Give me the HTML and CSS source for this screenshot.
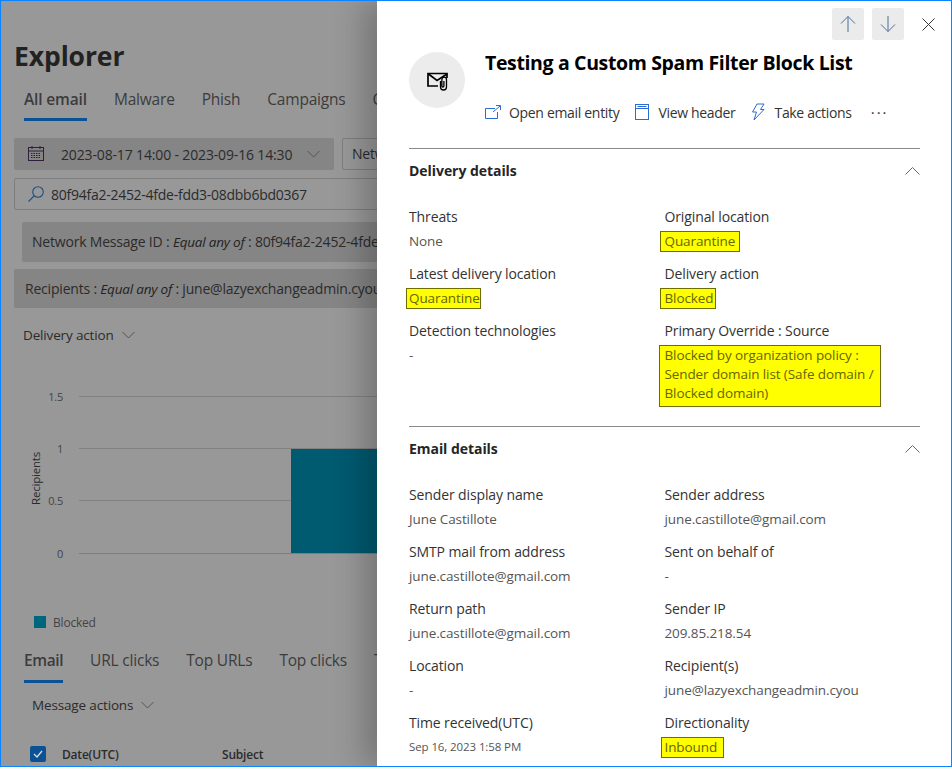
FILE: index.html
```html
<!DOCTYPE html>
<html lang="en">
<head>
<meta charset="utf-8">
<title>Explorer</title>
<link rel="stylesheet" href="styles.css">
</head>
<body>
<div class="frame">
  <main class="page">
    <h1 class="page-title">Explorer</h1>
    <nav class="tabs top-tabs">
      <span class="tab active">All email</span><span class="tab">Malware</span><span class="tab">Phish</span><span class="tab">Campaigns</span><span class="tab">Content</span>
    </nav>
    <div class="filter-row">
      <div class="date-chip">
        <svg class="ico" width="18" height="18" viewBox="0 0 18 18" fill="none" stroke="#2f1f3a"><rect x="1.5" y="2.5" width="15" height="13"/><path d="M1.500 6h15M5 1v3M13 1v3"/><path d="M4 8.500h10M4 10.500h10M4 12.500h10" stroke-dasharray="1.500 1"/></svg>
        <span class="date-text">2023-08-17 14:00 - 2023-09-16 14:30</span>
        <svg class="chev" width="13" height="8" viewBox="0 0 13 8" fill="none" stroke="#555"><path d="M.5 1l6 6 6-6"/></svg>
      </div>
      <div class="net-chip">Network Message ID</div>
    </div>
    <div class="search">
      <svg width="18" height="18" viewBox="0 0 18 18" fill="none" stroke="#1f4f86" stroke-width="1.100"><circle cx="11" cy="7" r="5.300"/><path d="M7 11l-5.500 5.500"/></svg>
      <span>80f94fa2-2452-4fde-fdd3-08dbb6bd0367</span>
    </div>
    <div class="pill pill-a">Network Message ID : <i>Equal any of</i> : 80f94fa2-2452-4fde-fdd3-08dbb6bd0367</div>
    <div class="pill pill-b">Recipients : <i>Equal any of</i> : june@lazyexchangeadmin.cyou</div>
    <div class="drop delivery-drop">Delivery action
      <svg width="13" height="8" viewBox="0 0 13 8" fill="none" stroke="#555"><path d="M.5 1l6 6 6-6"/></svg>
    </div>
    <section class="chart">
      <span class="y-title">Recipients</span>
      <div class="tick"><span class="tick-num">1.5</span><span class="tick-line"></span></div>
      <div class="tick"><span class="tick-num">1</span><span class="tick-line"></span></div>
      <div class="tick"><span class="tick-num">0.5</span><span class="tick-line"></span></div>
      <div class="tick"><span class="tick-num">0</span><span class="tick-line base"></span></div>
      <div class="bar"></div>
    </section>
    <div class="legend"><span class="swatch"></span>Blocked</div>
    <nav class="tabs bottom-tabs">
      <span class="tab active">Email</span><span class="tab">URL clicks</span><span class="tab">Top URLs</span><span class="tab">Top clicks</span><span class="tab">Top targeted users</span>
    </nav>
    <div class="drop message-drop">Message actions
      <svg width="13" height="8" viewBox="0 0 13 8" fill="none" stroke="#555"><path d="M.5 1l6 6 6-6"/></svg>
    </div>
    <div class="table-head">
      <span class="check"><svg width="10" height="8" viewBox="0 0 10 8" fill="none" stroke="#ddd" stroke-width="1.300"><path d="M1 4l3 3 5-6"/></svg></span>
      <span class="th-date">Date(UTC)</span>
      <span>Subject</span>
    </div>
  </main>

  <aside class="panel">
    <div class="nav-row">
      <button class="nav-btn" aria-label="Previous"><svg width="16" height="18" viewBox="0 0 16 18" fill="none" stroke="#4a6f96"><path d="M8 17V1.500M1 8.500l7-7 7 7"/></svg></button>
      <button class="nav-btn" aria-label="Next"><svg width="16" height="18" viewBox="0 0 16 18" fill="none" stroke="#4a6f96"><path d="M8 1v15.500M1 9.500l7 7 7-7"/></svg></button>
      <button class="close-btn" aria-label="Close"><svg width="13" height="13" viewBox="0 0 13 13" fill="none" stroke="#333"><path d="M.5.500l12 12M12.500.500l-12 12"/></svg></button>
    </div>
    <header class="head">
      <div class="avatar">
        <svg class="mail-ico" width="22" height="20" viewBox="0 0 22 20" fill="none" stroke="#000" stroke-width="1.700"><path d="M11 14H1V1.500h19V6"/><path d="M1.500 2l8.500 6.500L20 2"/><path d="M13.500 9v6a3 3 0 0 0 6 0V7.500a2.300 2.300 0 0 0-4.600 0V14a1 1 0 0 0 2 0V9" stroke-width="1.300"/></svg>
      </div>
      <div class="head-main">
        <h2 class="subject">Testing a Custom Spam Filter Block List</h2>
        <div class="actions">
          <span class="act act-open"><svg width="16" height="14" viewBox="0 0 16 14" fill="none" stroke="#2b6cd4"><path d="M10 3.500H.5v10h12V7"/><path d="M8 7l7-6M11 .5h4.500V5"/></svg>Open email entity</span>
          <span class="act"><svg width="14" height="16" viewBox="0 0 14 16" fill="none" stroke="#2b6cd4"><rect x=".5" y=".5" width="13" height="15"/><path d="M.5 4.500h13M2.500 2.500h9"/></svg>View header</span>
          <span class="act"><svg width="14" height="18" viewBox="0 0 14 18" fill="none" stroke="#2b6cd4"><path d="M6 1h7L9.500 6.500H13L3 17l2.500-8H1.500z"/></svg>Take actions</span>
          <span class="more">···</span>
        </div>
      </div>
    </header>

    <section class="sec">
      <div class="sec-head"><h3>Delivery details</h3><svg width="15" height="8" viewBox="0 0 15 8" fill="none" stroke="#666"><path d="M.5 7.500l7-7 7 7"/></svg></div>
      <div class="grid">
        <div class="field"><div class="lab">Threats</div><div class="val">None</div></div>
        <div class="field"><div class="lab">Original location</div><div class="val"><span class="mark m-original">Quarantine</span></div></div>
        <div class="field"><div class="lab">Latest delivery location</div><div class="val"><span class="mark m-latest">Quarantine</span></div></div>
        <div class="field"><div class="lab">Delivery action</div><div class="val"><span class="mark m-blocked">Blocked</span></div></div>
        <div class="field"><div class="lab">Detection technologies</div><div class="val">-</div></div>
        <div class="field"><div class="lab">Primary Override : Source</div><div class="val"><span class="mark block">Blocked by organization policy :<br>Sender domain list (Safe domain /<br>Blocked domain)</span></div></div>
      </div>
    </section>

    <section class="sec sec-email">
      <div class="sec-head"><h3>Email details</h3><svg width="15" height="8" viewBox="0 0 15 8" fill="none" stroke="#666"><path d="M.5 7.500l7-7 7 7"/></svg></div>
      <div class="grid">
        <div class="field"><div class="lab">Sender display name</div><div class="val">June Castillote</div></div>
        <div class="field"><div class="lab">Sender address</div><div class="val">june.castillote@gmail.com</div></div>
        <div class="field"><div class="lab">SMTP mail from address</div><div class="val">june.castillote@gmail.com</div></div>
        <div class="field"><div class="lab">Sent on behalf of</div><div class="val">-</div></div>
        <div class="field"><div class="lab">Return path</div><div class="val">june.castillote@gmail.com</div></div>
        <div class="field"><div class="lab">Sender IP</div><div class="val">209.85.218.54</div></div>
        <div class="field"><div class="lab">Location</div><div class="val">-</div></div>
        <div class="field"><div class="lab">Recipient(s)</div><div class="val">june@lazyexchangeadmin.cyou</div></div>
        <div class="field"><div class="lab">Time received(UTC)</div><div class="val small">Sep 16, 2023 1:58 PM</div></div>
        <div class="field"><div class="lab">Directionality</div><div class="val"><span class="mark m-inbound">Inbound</span></div></div>
      </div>
    </section>
  </aside>
</div>
</body>
</html>
```
FILE: styles.css
```css
* { box-sizing: border-box; }
html, body { margin: 0; padding: 0; height: 767px; overflow: hidden; }
body { font-family: "Open Sans", "Liberation Sans", sans-serif; font-size: 14px; letter-spacing: -0.2px; color: #2b2b2b; }
h1, h2, h3 { margin: 0; }
.frame { position: relative; width: 952px; height: 767px; overflow: hidden; background: #989898; border: 1px solid #0a84ff; }

/* Dimmed page */
.page { width: 376px; height: 100%; padding-left: 13px; white-space: nowrap; overflow: hidden; }
.page-title { padding-top: 37px; font-size: 26.500px; line-height: 36px; font-weight: 700; letter-spacing: -0.1px; color: #222; }
.tabs { display: flex; font-size: 15.500px; letter-spacing: -0.2px; color: #3c3c3c; }
.tab { margin-right: 27px; line-height: 20px; }
.tab.active { font-weight: 600; letter-spacing: -0.15px; border-bottom: 3px solid #0a5294; }
.top-tabs { margin: 15px 0 0 10px; height: 32px; }
.top-tabs .tab { padding-bottom: 9px; }
.bottom-tabs .tab.active { letter-spacing: -0.4px; }
.filter-row { display: flex; gap: 8px; margin-top: 17px; }
.date-chip { flex: none; width: 320px; height: 32px; display: flex; align-items: center; padding-left: 13px; background: #858585; border-radius: 2px; letter-spacing: -0.15px; }
.date-text { margin-left: 16px; }
.chev { margin-left: 15px; }
.net-chip { flex: none; width: 200px; height: 32px; padding-left: 9px; line-height: 30px; border: 1px solid #7e7e7e; border-radius: 2px; }
.search { height: 32px; width: 500px; margin-top: 8px; padding-left: 12px; display: flex; align-items: center; gap: 6px; border: 1px solid #7e7e7e; border-radius: 2px; letter-spacing: -0.26px; }
.pill { background: #858585; border-radius: 2px; width: 500px; overflow: hidden; }
.pill-a { margin: 12px 0 0 8px; padding-left: 10px; height: 40px; line-height: 40px; }
.pill-b { margin-top: 7px; padding-left: 11px; height: 39px; line-height: 40px; }
.pill i { font-size: 13.500px; color: #222; }
.drop { display: flex; align-items: center; gap: 8px; font-size: 13.500px; letter-spacing: -0.15px; }
.delivery-drop { margin: 17px 0 0 9px; height: 20px; }
.chart { position: relative; margin-top: 25px; padding-left: 32px; width: 500px; height: 232px; }
.y-title { position: absolute; left: 14px; top: 135px; font-size: 11.500px; transform: rotate(-90deg); transform-origin: left top; }
.tick { display: flex; align-items: center; height: 52.300px; font-size: 11px; color: #444; }
.tick-num { width: 17px; text-align: right; margin-right: 16px; }
.tick-line { flex: 1; height: 1px; background: #818181; }
.tick-line.base { background: #7c7c86; }
.bar { position: absolute; left: 277px; top: 79px; width: 300px; height: 104px; background: #005a70; }
.legend { display: flex; align-items: center; gap: 7px; margin: 11px 0 0 20px; height: 18px; font-size: 12px; color: #444; }
.swatch { width: 12px; height: 12px; background: #00667e; }
.bottom-tabs { margin: 19px 0 0 10px; height: 33px; }
.bottom-tabs .tab { padding-bottom: 10px; }
.message-drop { margin: 12px 0 0 18px; height: 20px; }
.table-head { display: flex; align-items: center; margin: 30px 0 0 16px; height: 18px; font-size: 12px; font-weight: 600; letter-spacing: -0.2px; }
.check { display: flex; align-items: center; justify-content: center; width: 16px; height: 16px; border-radius: 2px; background: #0a5294; margin-right: 16px; }
.th-date { width: 160px; }

/* Details panel */
.panel { position: absolute; top: 0; right: 0; bottom: 0; left: 376px; padding: 7px 31px 0 32px; background: #fff; box-shadow: -14px 0 28px rgba(0,0,0,.22); }
.nav-row { display: flex; justify-content: flex-end; align-items: center; margin-right: -24px; gap: 8px; height: 32px; }
.nav-btn { width: 32px; height: 32px; padding: 0; display: flex; align-items: center; justify-content: center; background: #ebebeb; border: 0; border-radius: 2px; }
.close-btn { width: 32px; height: 32px; padding: 0; background: none; border: 0; display: flex; align-items: center; justify-content: center; }
.head { display: flex; gap: 20px; margin-top: 12px; height: 96px; }
.avatar { width: 56px; height: 56px; border-radius: 50%; background: #ececec; display: flex; align-items: center; justify-content: center; flex: none; }
.mail-ico { margin: 3px 0 0 2px; }
.subject { margin-top: -1px; font-size: 19.500px; line-height: 24px; font-weight: 700; letter-spacing: -0.36px; color: #000; }
.actions { display: flex; align-items: center; margin-top: 25px; height: 24px; color: #333; letter-spacing: -0.32px; }
.act { display: flex; align-items: center; gap: 9px; margin-right: 16px; }
.act-open { gap: 8px; }
.act svg { flex: none; }
.more { margin-left: 3px; letter-spacing: 2px; font-size: 15px; color: #333; }
.sec { border-top: 1px solid #8a8a8a; height: 278px; }
.sec-email { height: auto; }
.sec-head { display: flex; align-items: center; justify-content: space-between; height: 43px; }
.sec-head h3 { font-size: 14px; font-weight: 700; letter-spacing: -0.05px; color: #252525; }
.grid { display: grid; grid-template-columns: 255.500px 1fr; grid-auto-rows: 57px; margin-top: 15px; }
.lab { line-height: 20px; letter-spacing: -0.12px; color: #333; }
.val { margin-top: 4px; line-height: 20px; font-size: 13.500px; letter-spacing: -0.1px; color: #555; }
.val.small { font-size: 11.500px; }
.mark { display: inline-block; margin: -1px 0 -1px -5px; padding: 0 4px; line-height: 19px; background: #ffff00; border: 1px solid #6e6e00; color: #666600; }
.m-latest { margin-left: -3px; padding: 0 0 0 2px; }
.m-blocked { padding-right: 2px; }
.m-inbound { margin-left: -4px; padding: 0 6px 0 3px; }
.mark.block { position: relative; z-index: 1; margin: 0 0 0 -6px; padding: 0 5px 2px; width: 222px; line-height: 19.200px; }
```
